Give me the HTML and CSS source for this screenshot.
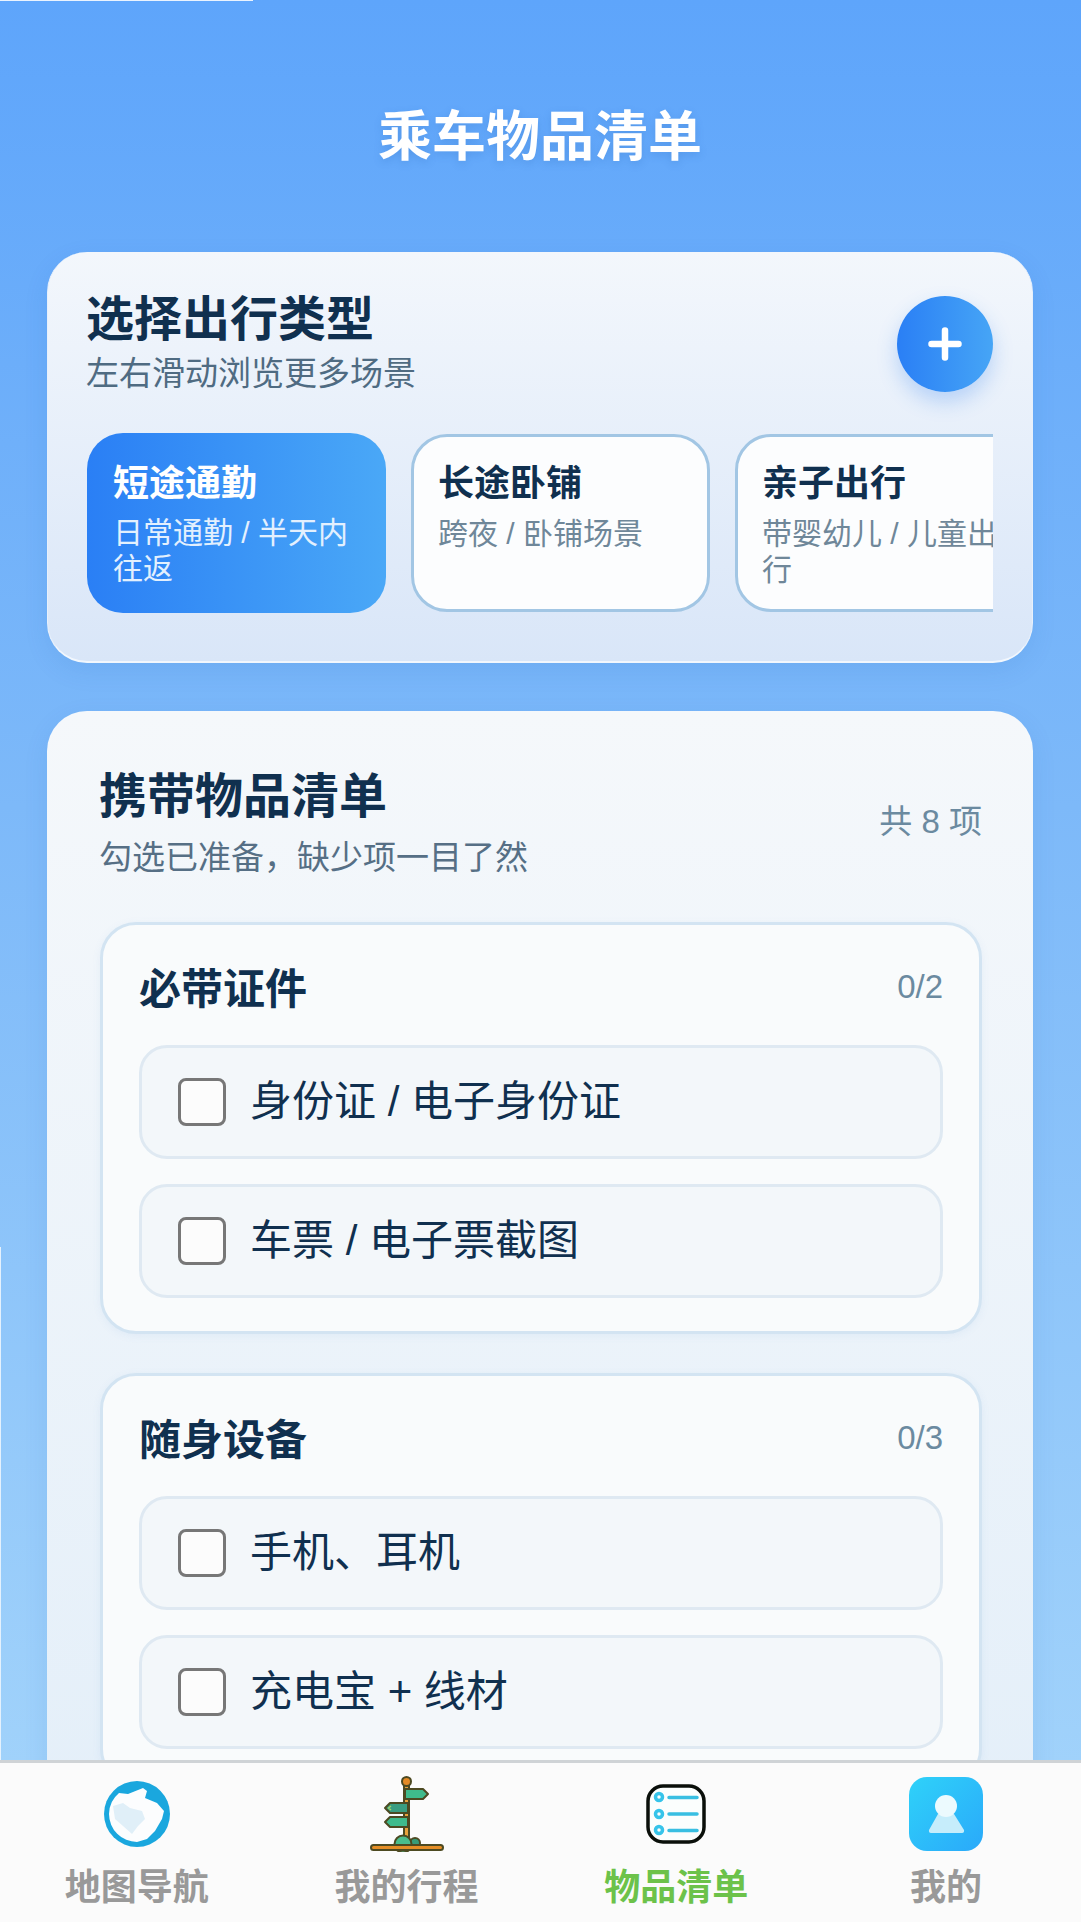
FILE: index.html
```html
<!DOCTYPE html>
<html lang="zh-CN">
<head>
<meta charset="utf-8">
<title>乘车物品清单</title>
<link rel="stylesheet" href="styles.css">
</head>
<body>
<div class="app">
  <main class="content">
    <h1 class="page-title">乘车物品清单</h1>

    <section class="panel trip-panel">
      <div class="trip-head">
        <div>
          <h2 class="panel-title">选择出行类型</h2>
          <p class="trip-hint">左右滑动浏览更多场景</p>
        </div>
        <button class="add-btn" type="button" aria-label="添加">
          <svg width="34" height="34" viewBox="0 0 34 34"><path d="M17 3.500v27M3.500 17h27" stroke="#fff" stroke-width="6.500" stroke-linecap="round"/></svg>
        </button>
      </div>
      <div class="chip-row">
        <div class="chip chip-active">
          <div class="chip-title">短途通勤</div>
          <div class="chip-desc">日常通勤 / 半天内往返</div>
        </div>
        <div class="chip">
          <div class="chip-title">长途卧铺</div>
          <div class="chip-desc">跨夜 / 卧铺场景</div>
        </div>
        <div class="chip">
          <div class="chip-title">亲子出行</div>
          <div class="chip-desc">带婴幼儿 / 儿童出行</div>
        </div>
      </div>
    </section>

    <section class="panel list-panel">
      <div class="list-head">
        <div>
          <h2 class="panel-title">携带物品清单</h2>
          <p class="list-hint">勾选已准备，缺少项一目了然</p>
        </div>
        <span class="list-total">共 8 项</span>
      </div>

      <div class="group">
        <div class="group-head">
          <h3 class="group-title">必带证件</h3>
          <span class="group-count">0/2</span>
        </div>
        <label class="item"><span class="check"></span><span class="item-text">身份证 / 电子身份证</span></label>
        <label class="item"><span class="check"></span><span class="item-text">车票 / 电子票截图</span></label>
      </div>

      <div class="group">
        <div class="group-head">
          <h3 class="group-title">随身设备</h3>
          <span class="group-count">0/3</span>
        </div>
        <label class="item"><span class="check"></span><span class="item-text">手机、耳机</span></label>
        <label class="item"><span class="check"></span><span class="item-text">充电宝 + 线材</span></label>
      </div>
    </section>
  </main>

  <nav class="tabbar">
    <a class="tab">
      <span class="tab-icon">
        <svg width="66" height="66" viewBox="0 0 66 66">
          <circle cx="33" cy="33" r="33" fill="#1aa7de"/>
          <path d="M15 12 24 13 39 7 43 10 41 17 53 22 60 30 58 38 51 50 43 58 33 61A28 28 0 0 1 5 33 28 28 0 0 1 15 12Z" fill="#fcfdfe"/>
          <path d="M9 25 19 22 26 27 38 30 41 38 34 45 28 53 19 45 11 38Z" fill="#e0eff8"/>
        </svg>
      </span>
      <span class="tab-label">地图导航</span>
    </a>
    <a class="tab">
      <span class="tab-icon">
        <svg width="74" height="76" viewBox="0 0 74 76" stroke="#4d4a22" stroke-width="2" stroke-linejoin="round">
          <rect x="34" y="8" width="5" height="60" fill="#e8a23c"/>
          <circle cx="36.500" cy="5.500" r="4.500" fill="#e58a25"/>
          <path d="M35 13H53L58 18 53 23H35Z" fill="#3fbb8c"/>
          <path d="M38 27H20L15 32 20 37H38Z" fill="#3a9d80"/>
          <path d="M38 41H20L15 46 20 51H38Z" fill="#3fbb8c"/>
          <path d="M21 30 18.500 32 21 34" fill="none" stroke="#a6d66c" stroke-width="1.500"/>
          <circle cx="45" cy="67" r="5" fill="#379c78"/>
          <circle cx="33" cy="68" r="8.500" fill="#4bbd8c"/>
          <rect x="1" y="69" width="72" height="5" rx="2.500" fill="#e58e26"/>
        </svg>
      </span>
      <span class="tab-label">我的行程</span>
    </a>
    <a class="tab tab-current">
      <span class="tab-icon">
        <svg width="62" height="62" viewBox="0 0 62 62" fill="none">
          <rect x="3" y="3" width="56" height="56" rx="15" fill="#fbfefd" stroke="#0a0f0a" stroke-width="3.500"/>
          <g stroke="#36c4ea" stroke-width="3.500">
            <circle cx="14" cy="14" r="3.500"/>
            <circle cx="14" cy="31" r="3.500"/>
            <circle cx="14" cy="47" r="3.500"/>
          </g>
          <g stroke="#38bfe2" stroke-width="3.500" stroke-linecap="round">
            <path d="M24 14.500H52M24 31H52M24 47.500H52"/>
          </g>
        </svg>
      </span>
      <span class="tab-label">物品清单</span>
    </a>
    <a class="tab">
      <span class="tab-icon">
        <svg width="74" height="74" viewBox="0 0 74 74">
          <defs>
            <linearGradient id="personBg" x1="0" y1="0" x2="1" y2="1">
              <stop offset="0" stop-color="#2fd2f9"/>
              <stop offset="1" stop-color="#2aa9fa"/>
            </linearGradient>
          </defs>
          <rect width="74" height="74" rx="18" fill="url(#personBg)"/>
          <path d="M29 37H45L55 53Q55.500 56 53 56H22Q19.500 56 20 53Z" fill="#c6edfb"/>
          <circle cx="37" cy="29" r="11" fill="#ecfafe"/>
        </svg>
      </span>
      <span class="tab-label">我的</span>
    </a>
  </nav>
</div>
</body>
</html>
```

FILE: styles.css
```css
* {
  box-sizing: border-box;
}

html,
body {
  margin: 0;
  padding: 0;
}

body {
  font-family: "Liberation Sans", "Noto Sans CJK SC", sans-serif;
  color: #10304f;
}

.app {
  position: relative;
  width: 1081px;
  height: 1922px;
  display: flex;
  flex-direction: column;
  overflow: hidden;
  background: linear-gradient(180deg, #5ea5fb 0%, #7db9f9 42%, #a6d6fb 100%);
}

/* hairline highlights along the window edges */
.app::before {
  content: "";
  position: absolute;
  left: 0;
  top: 0;
  width: 253px;
  height: 1px;
  background: #eaf3fe;
}

.app::after {
  content: "";
  position: absolute;
  left: 0;
  top: 1247px;
  width: 1px;
  height: 513px;
  background: #e4f1fd;
}

.content {
  flex: 1;
  min-height: 0;
  overflow: hidden;
  padding: 0 48px 0 47px;
}

.page-title {
  margin: 0;
  height: 252px;
  padding-top: 101px;
  font-size: 54px;
  line-height: 72px;
  font-weight: 700;
  text-align: center;
  color: #fff;
  text-shadow: 0 3px 8px rgba(30, 90, 170, 0.2);
}

.panel {
  border-radius: 40px;
  box-shadow: 0 8px 24px rgba(40, 100, 180, 0.1);
}

.trip-panel {
  height: 411px;
  padding: 36px 39px 0;
  background: linear-gradient(180deg, #f3f7fc 0%, #d9e6f8 100%);
  border-bottom: 2px solid #f2f7fd;
  border-right: 1px solid #e8f0fb;
  border-left: 1px solid #e8f0fb;
}

.trip-head {
  display: flex;
  justify-content: space-between;
  align-items: flex-start;
  height: 145px;
}

.panel-title {
  margin: 0 0 0 -1px;
  font-size: 48px;
  line-height: 64px;
  font-weight: 700;
  color: #10304f;
}

.trip-hint {
  margin: 0 0 0 -1px;
  font-size: 33px;
  line-height: 44px;
  color: #4f6b82;
}

.add-btn {
  width: 96px;
  height: 96px;
  margin-top: 8px;
  border: 0;
  padding: 0;
  border-radius: 50%;
  display: flex;
  align-items: center;
  justify-content: center;
  background: linear-gradient(90deg, #2a7ff5 0%, #46a5f6 100%);
  box-shadow: 0 10px 20px rgba(50, 130, 240, 0.28);
}

.chip-row {
  display: flex;
  align-items: flex-start;
  gap: 25px;
  overflow: hidden;
  padding-bottom: 10px;
}

.chip {
  flex: 0 0 299px;
  height: 178px;
  margin-top: 1px;
  padding: 25px 24px 0;
  border: 3px solid #a2c6e4;
  border-radius: 36px;
  background: #fcfdfe;
}

.chip-active {
  height: 180px;
  margin-top: 0;
  border: 0;
  padding: 29px 26px 0;
  color: #fff;
  background: linear-gradient(90deg, #2a7ff5 0%, #4aa8f7 100%);
}

.chip-title {
  font-size: 36px;
  line-height: 44px;
  font-weight: 700;
}

.chip-desc {
  margin-top: 10px;
  font-size: 30px;
  line-height: 36px;
  color: #6f8799;
}

.chip-active .chip-desc {
  margin-top: 9px;
  color: #e3f0fe;
}

.list-panel {
  height: 1100px;
  margin-top: 48px;
  padding: 54px 51px 0 53px;
  background: linear-gradient(180deg, #f5f8fb 0%, #e4eff9 100%);
}

.list-head {
  display: flex;
  justify-content: space-between;
  align-items: flex-start;
  height: 157px;
}

.list-hint {
  margin: 6px 0 0 -1px;
  font-size: 33px;
  line-height: 46px;
  color: #566f85;
}

.list-total {
  margin-top: 37px;
  font-size: 33px;
  line-height: 40px;
  color: #6b8aa0;
}

.group {
  height: 412px;
  margin-bottom: 39px;
  padding: 0 36px;
  border: 3px solid #d3e4f2;
  border-radius: 36px;
  background: #f9fbfc;
  box-shadow: 0 2px 8px rgba(90, 140, 200, 0.08);
}

.group-head {
  display: flex;
  justify-content: space-between;
  align-items: center;
  height: 120px;
  padding-top: 10px;
}

.group-title {
  margin: 0;
  font-size: 42px;
  line-height: 54px;
  font-weight: 700;
  color: #10304f;
}

.group-count {
  font-size: 33px;
  color: #6b8aa0;
  margin-top: -6px;
}

.item {
  display: flex;
  align-items: center;
  gap: 24px;
  height: 114px;
  margin-bottom: 25px;
  padding-left: 36px;
  border: 3px solid #dfe9f2;
  border-radius: 28px;
  background: #f3f7fa;
}

.check {
  flex: none;
  width: 48px;
  height: 48px;
  border: 3px solid #777;
  border-radius: 8px;
  background: #fcfcfc;
}

.item-text {
  font-size: 42px;
  line-height: 56px;
  color: #10304f;
}

.tabbar {
  flex: none;
  height: 162px;
  display: grid;
  grid-template-columns: repeat(4, 1fr);
  padding-left: 2px;
  background: #fbfbfb;
  border-top: 3px solid #cfd3d6;
}

.tab {
  display: flex;
  flex-direction: column;
  align-items: center;
  color: #999;
}

.tab-icon {
  height: 101px;
  display: flex;
  align-items: center;
  justify-content: center;
}

.tab-label {
  font-size: 36px;
  line-height: 48px;
  font-weight: 700;
}

.tab-current {
  color: #6cc24a;
}
```
